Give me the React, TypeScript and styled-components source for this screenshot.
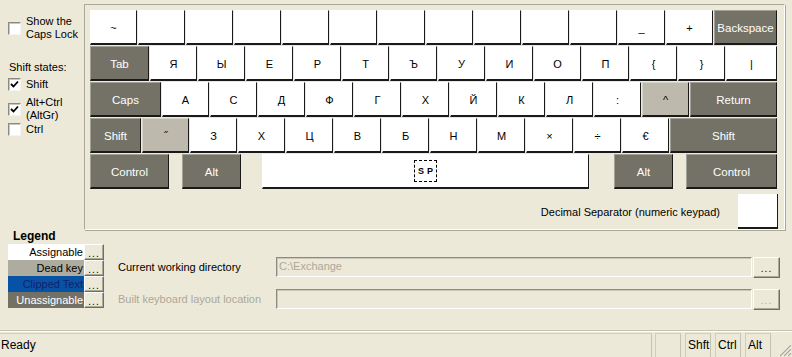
import styled, { createGlobalStyle } from "styled-components";

const GlobalStyle = createGlobalStyle`
  html, body {
    margin: 0;
    background: #ece9d8;
  }
`;

type KeyKind = "white" | "dark" | "dead" | "space";

interface KeyDef {
  label: string;
  w: number;
  kind: KeyKind;
  ml?: number;
}

const W = 47;

const white = (label: string): KeyDef => ({ label, w: W, kind: "white" });

const rows: KeyDef[][] = [
  [
    white("~"),
    ...Array.from({ length: 10 }, () => white("")),
    white("_"),
    white("+"),
    { label: "Backspace", w: 63, kind: "dark" },
  ],
  [
    { label: "Tab", w: 59, kind: "dark" },
    ...["Я", "Ы", "Е", "Р", "Т", "Ъ", "У", "И", "О", "П", "{", "}"].map(white),
    { label: "|", w: 51, kind: "white" },
  ],
  [
    { label: "Caps", w: 71, kind: "dark" },
    ...["А", "С", "Д", "Ф", "Г", "Х", "Й", "К", "Л", ":"].map(white),
    { label: "^", w: W, kind: "dead" },
    { label: "Return", w: 87, kind: "dark" },
  ],
  [
    { label: "Shift", w: 51, kind: "dark" },
    { label: "˝", w: W, kind: "dead" },
    ...["З", "Х", "Ц", "В", "Б", "Н", "М", "×", "÷", "€"].map(white),
    { label: "Shift", w: 107, kind: "dark" },
  ],
  [
    { label: "Control", w: 79, kind: "dark" },
    { label: "Alt", w: 59, kind: "dark", ml: 12 },
    { label: "", w: 327, kind: "space", ml: 20 },
    { label: "Alt", w: 59, kind: "dark", ml: 24 },
    { label: "Control", w: 91, kind: "dark", ml: 12 },
  ],
];

const keyBg: Record<KeyKind, string> = {
  white: "#ffffff",
  dark: "#747266",
  dead: "#bdbaad",
  space: "#ffffff",
};

const keyLight: Record<KeyKind, string> = {
  white: "#ffffff",
  dark: "#a3a195",
  dead: "#d6d3c7",
  space: "#ffffff",
};

const App = styled.div`
  width: 792px;
  height: 357px;
  display: flex;
  flex-direction: column;
  background: #ece9d8;
  font-family: "Liberation Sans", Arial, sans-serif;
  font-size: 11px;
  color: #000;
  overflow: hidden;
`;

const Top = styled.div`
  display: flex;
  height: 230px;
`;

const Sidebar = styled.div`
  width: 84px;
  box-sizing: border-box;
  padding: 15px 0 0 8px;
  display: flex;
  flex-direction: column;
`;

const CheckRow = styled.label<{ $mt?: number }>`
  display: flex;
  align-items: center;
  gap: 5px;
  line-height: 13px;
  margin-top: ${(p) => p.$mt ?? 0}px;
`;

const Box = styled.span`
  width: 13px;
  height: 13px;
  box-sizing: border-box;
  flex: none;
  background: #fff;
  border-top: 1px solid #8d8a80;
  border-left: 1px solid #8d8a80;
  border-right: 1px solid #f4f3ee;
  border-bottom: 1px solid #f4f3ee;
  box-shadow: inset 1px 1px 0 #c9c6ba;
  display: flex;
  align-items: center;
  justify-content: center;
`;

const GroupLabel = styled.div`
  margin-top: 20px;
  line-height: 13px;
  padding-left: 1px;
`;

const Frame = styled.div`
  margin-top: 4px;
  width: 701px;
  height: 226px;
  box-sizing: border-box;
  border-top: 1px solid #aca899;
  border-left: 1px solid #aca899;
  border-right: 1px solid #fff;
  border-bottom: 1px solid #fff;
  box-shadow: 1px 1px 0 #aca899;
  padding: 5px 0 0 5px;
  display: flex;
  flex-direction: column;
  gap: 1px;
`;

const KeyRow = styled.div`
  display: flex;
  gap: 1px;
`;

const Key = styled.div<{ $w: number; $kind: KeyKind; $ml?: number }>`
  width: ${(p) => p.$w}px;
  height: 35px;
  margin-left: ${(p) => p.$ml ?? 0}px;
  box-sizing: border-box;
  background: ${(p) => keyBg[p.$kind]};
  color: ${(p) => (p.$kind === "dark" ? "#fff" : "#000")};
  border-top: 1px solid ${(p) => keyLight[p.$kind]};
  border-left: 1px solid ${(p) => keyLight[p.$kind]};
  border-right: 1px solid #1a1a1a;
  border-bottom: 2px solid #1a1a1a;
  display: flex;
  align-items: center;
  justify-content: center;
  font-size: ${(p) => (p.$kind === "dark" ? 11.5 : 11)}px;
  padding-top: 2px;
`;

const Focus = styled.span`
  width: 23px;
  height: 22px;
  box-sizing: border-box;
  border: 1px dashed #000;
  display: flex;
  align-items: center;
  justify-content: center;
  font-size: 9px;
  font-weight: bold;
  letter-spacing: 3px;
  padding-left: 3px;
  margin-top: -2px;
`;

const DecimalRow = styled.div`
  display: flex;
  align-items: center;
  justify-content: flex-end;
  gap: 18px;
  margin-top: 4px;
  padding-right: 6px;
  font-size: 11px;
`;

const DecimalBox = styled.div`
  width: 40px;
  height: 35px;
  box-sizing: border-box;
  background: #fff;
  border-right: 1px solid #1a1a1a;
  border-bottom: 2px solid #1a1a1a;
`;

const Bottom = styled.div`
  display: flex;
`;

const Legend = styled.div`
  width: 96px;
  margin-left: 8px;
`;

const LegendTitle = styled.div`
  font-weight: bold;
  font-size: 12px;
  line-height: 13px;
  padding-left: 5px;
  margin-bottom: 1px;
`;

const LegendRow = styled.div`
  display: flex;
  height: 16px;
`;

const Swatch = styled.div<{ $bg: string; $fg: string }>`
  width: 76px;
  background: ${(p) => p.$bg};
  color: ${(p) => p.$fg};
  text-align: right;
  line-height: 16px;
  padding-right: 1px;
  box-sizing: border-box;
  white-space: nowrap;
  overflow: hidden;
`;

const DotsButton = styled.div<{ $w: number; $h: number; $disabled?: boolean }>`
  width: ${(p) => p.$w}px;
  height: ${(p) => p.$h}px;
  box-sizing: border-box;
  background: #ece9d8;
  border-top: 1px solid #fff;
  border-left: 1px solid #fff;
  border-right: 1px solid #716f64;
  border-bottom: 1px solid #716f64;
  box-shadow: inset -1px -1px 0 #aca899;
  color: ${(p) => (p.$disabled ? "#aca899" : "#000")};
  display: flex;
  align-items: center;
  justify-content: center;
  font-size: 10px;
  letter-spacing: 1px;
  padding-top: 2px;
`;

const Fields = styled.div`
  margin-left: 14px;
  padding-top: 27px;
  display: flex;
  flex-direction: column;
  gap: 12px;
`;

const FieldRow = styled.div`
  display: flex;
  align-items: center;
  height: 20px;
`;

const FieldLabel = styled.div<{ $disabled?: boolean }>`
  width: 158px;
  color: ${(p) => (p.$disabled ? "#aca899" : "#000")};
`;

const TextBox = styled.div`
  width: 476px;
  height: 20px;
  box-sizing: border-box;
  border-top: 1px solid #8d8a80;
  border-left: 1px solid #8d8a80;
  border-right: 1px solid #fff;
  border-bottom: 1px solid #fff;
  box-shadow: inset 1px 1px 0 #c9c6ba;
  color: #aca899;
  padding: 2px 0 0 2px;
  margin-right: 1px;
`;

const StatusBar = styled.div`
  margin-top: auto;
  height: 27px;
  box-sizing: border-box;
  border-top: 1px solid #c5c2b2;
  box-shadow: inset 0 1px 0 #fff;
  display: flex;
  gap: 4px;
  padding-top: 2px;
`;

const StatusPanel = styled.div<{ $w?: number }>`
  ${(p) => (p.$w ? `width: ${p.$w}px;` : "flex: 1;")}
  box-sizing: border-box;
  border-top: 1px solid #d0cdbf;
  border-left: 1px solid #d0cdbf;
  border-right: 1px solid #c5c2b2;
  display: flex;
  align-items: center;
  padding: 0 0 2px 2px;
  font-size: 12px;
`;

const ReadyPanel = styled(StatusPanel)`
  border-left: none;
  padding-left: 1px;
  margin-right: -1px;
`;

const Grip = styled.div`
  width: 17px;
  display: flex;
  align-items: flex-end;
  justify-content: flex-end;
`;

const Check = () => (
  <svg width="9" height="9" viewBox="0 0 9 9">
    <polyline points="1,4 3.5,6.5 8,1.5" fill="none" stroke="#000" strokeWidth="1.8" />
  </svg>
);

const legend = [
  { label: "Assignable", bg: "#ffffff", fg: "#000" },
  { label: "Dead key", bg: "#aeab9f", fg: "#000" },
  { label: "Clipped Text", bg: "#0653a6", fg: "#14216b" },
  { label: "Unassignable", bg: "#737166", fg: "#fff" },
];

export default function KeyboardLayoutCreator() {
  return (
    <App>
      <GlobalStyle />
      <Top>
        <Sidebar>
          <CheckRow>
            <Box />
            <span>
              Show the
              <br />
              Caps Lock
            </span>
          </CheckRow>
          <GroupLabel>Shift states:</GroupLabel>
          <CheckRow $mt={4}>
            <Box>
              <Check />
            </Box>
            <span>Shift</span>
          </CheckRow>
          <CheckRow $mt={5}>
            <Box>
              <Check />
            </Box>
            <span>
              Alt+Ctrl
              <br />
              (AltGr)
            </span>
          </CheckRow>
          <CheckRow $mt={1}>
            <Box />
            <span>Ctrl</span>
          </CheckRow>
        </Sidebar>
        <Frame>
          {rows.map((row, i) => (
            <KeyRow key={i}>
              {row.map((k, j) => (
                <Key key={j} $w={k.w} $kind={k.kind} $ml={k.ml}>
                  {k.kind === "space" ? <Focus>SP</Focus> : k.label}
                </Key>
              ))}
            </KeyRow>
          ))}
          <DecimalRow>
            <span>Decimal Separator (numeric keypad)</span>
            <DecimalBox />
          </DecimalRow>
        </Frame>
      </Top>
      <Bottom>
        <Legend>
          <LegendTitle>Legend</LegendTitle>
          {legend.map((l) => (
            <LegendRow key={l.label}>
              <Swatch $bg={l.bg} $fg={l.fg}>
                {l.label}
              </Swatch>
              <DotsButton $w={20} $h={16}>
                ...
              </DotsButton>
            </LegendRow>
          ))}
        </Legend>
        <Fields>
          <FieldRow>
            <FieldLabel>Current working directory</FieldLabel>
            <TextBox>C:\Exchange</TextBox>
            <DotsButton $w={27} $h={21}>
              ...
            </DotsButton>
          </FieldRow>
          <FieldRow>
            <FieldLabel $disabled>Built keyboard layout location</FieldLabel>
            <TextBox />
            <DotsButton $w={27} $h={21} $disabled>
              ...
            </DotsButton>
          </FieldRow>
        </Fields>
      </Bottom>
      <StatusBar>
        <ReadyPanel>Ready</ReadyPanel>
        <StatusPanel $w={26} />
        <StatusPanel $w={26}>Shft</StatusPanel>
        <StatusPanel $w={26}>Ctrl</StatusPanel>
        <StatusPanel $w={26}>Alt</StatusPanel>
        <Grip>
          <svg width="14" height="14" viewBox="0 0 14 14">
            {[0, 4, 8].map((o) => (
              <g key={o}>
                <line x1={13} y1={1 + o} x2={1 + o} y2={13} stroke="#fff" strokeWidth="1" />
                <line x1={13} y1={2 + o} x2={2 + o} y2={13} stroke="#aca899" strokeWidth="1.2" />
              </g>
            ))}
          </svg>
        </Grip>
      </StatusBar>
    </App>
  );
}
